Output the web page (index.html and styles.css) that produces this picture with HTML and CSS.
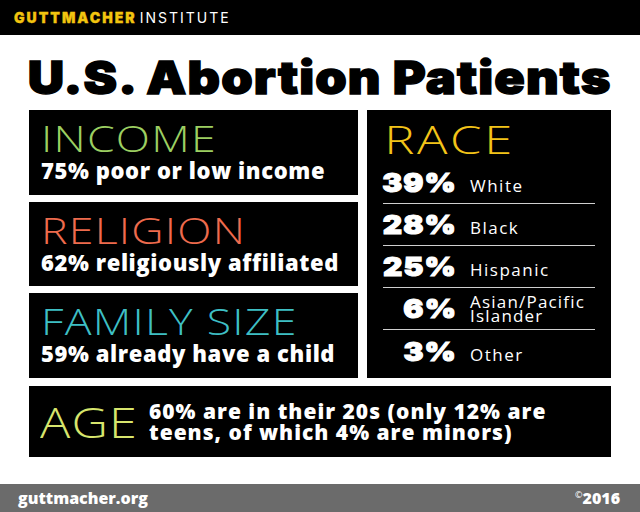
FILE: index.html
```html
<!DOCTYPE html>
<html>
<head>
<meta charset="utf-8">
<link rel="stylesheet" href="styles.css">
</head>
<body>
<div class="page">
  <header class="topbar"><span class="brand">GUTTMACHER</span><span class="inst">INSTITUTE</span></header>
  <h1 class="title"><span class="titletext">U.S. Abortion Patients</span></h1>
  <div class="grid">
    <div class="left">
      <div class="box">
        <div class="head green">INCOME</div>
        <div class="sub">75% poor or low income</div>
      </div>
      <div class="box">
        <div class="head orange">RELIGION</div>
        <div class="sub">62% religiously affiliated</div>
      </div>
      <div class="box">
        <div class="head teal">FAMILY SIZE</div>
        <div class="sub">59% already have a child</div>
      </div>
    </div>
    <div class="race">
      <div class="racehead">RACE</div>
      <div class="row"><span class="num">39%</span><span class="lab">White</span></div>
      <div class="row"><span class="num">28%</span><span class="lab">Black</span></div>
      <div class="row"><span class="num">25%</span><span class="lab">Hispanic</span></div>
      <div class="row"><span class="num">6%</span><span class="lab two">Asian/Pacific<br>Islander</span></div>
      <div class="row last"><span class="num">3%</span><span class="lab">Other</span></div>
    </div>
  </div>
  <div class="age">
    <div class="agehead">AGE</div>
    <div class="agetext">60% are in their 20s (only 12% are<br>teens, of which 4% are minors)</div>
  </div>
  <footer class="foot"><span class="url">guttmacher.org</span><span class="year"><sup>©</sup>2016</span></footer>
</div>
</body>
</html>
```

FILE: styles.css
```css
* { box-sizing: border-box; }
html, body { margin: 0; padding: 0; background: #fff; }
.page {
  width: 640px;
  height: 512px;
  display: flex;
  flex-direction: column;
  font-family: "Inter", "Liberation Sans", sans-serif;
  overflow: hidden;
}
.topbar {
  height: 35px;
  background: #000;
  display: flex;
  align-items: center;
  padding-left: 14px;
  font-size: 14px;
  letter-spacing: 2px;
}
.brand { color: #f2c40f; font-weight: 900; -webkit-text-stroke: 0.3px #f2c40f; }
.inst { color: #fff; font-weight: 400; margin-left: 3px; }
.title {
  margin: 17px 0 0 0;
  height: 58px;
  text-align: center;
  font-weight: 900;
  font-size: 45px;
  line-height: 52px;
  color: #000;
}
.titletext {
  display: inline-block;
  letter-spacing: 1px;
  -webkit-text-stroke: 1.4px #000;
  transform: scaleX(1.12);
  transform-origin: center;
}
.grid {
  display: grid;
  grid-template-columns: 329px 244px;
  column-gap: 9px;
  margin-left: 29px;
  height: 268px;
}
.left {
  display: flex;
  flex-direction: column;
  gap: 7px;
}
.box {
  background: #000;
  flex: 1;
  padding: 10px 0 0 12px;
}
.head {
  font-family: "Open Sans", sans-serif;
  font-weight: 300;
  font-size: 36px;
  line-height: 38px;
  letter-spacing: 1px;
  transform: scaleX(1.24);
  transform-origin: left center;
  white-space: nowrap;
}
.green { color: #9ccf62; }
.orange { color: #ee6b4d; }
.teal { color: #3ebfc4; }
.sub {
  color: #fff;
  font-family: "Open Sans", sans-serif;
  font-weight: 800;
  font-size: 22px;
  line-height: 24px;
  letter-spacing: 0.6px;
  white-space: nowrap;
}
.race {
  background: #000;
  padding: 6px 16px 0 16px;
  display: flex;
  flex-direction: column;
}
.racehead {
  color: #f3c419;
  font-family: "Open Sans", sans-serif;
  font-weight: 300;
  font-size: 39px;
  line-height: 46px;
  padding-left: 1px;
  letter-spacing: 2px;
  transform: scaleX(1.3);
  transform-origin: left center;
}
.row {
  height: 42px;
  display: flex;
  align-items: center;
  border-bottom: 1px solid #cfcfcf;
}
.row.last { border-bottom: none; }
.num {
  width: 74px;
  text-align: right;
  color: #fff;
  font-weight: 900;
  font-size: 26px;
  letter-spacing: 1px;
  margin-right: -1px;
  -webkit-text-stroke: 1.1px #fff;
  transform: scaleX(1.15);
  transform-origin: right center;
}
.lab {
  color: #fff;
  font-family: "Open Sans", sans-serif;
  font-weight: 400;
  font-size: 17px;
  letter-spacing: 1.5px;
  margin-left: 14px;
  padding-top: 6px;
  white-space: nowrap;
}
.lab.two { line-height: 14px; padding-top: 0; letter-spacing: 1.2px; }
.age {
  margin: 8px 0 0 29px;
  width: 582px;
  height: 71px;
  background: #000;
  display: flex;
  align-items: center;
  padding-left: 11px;
}
.agehead {
  color: #d7e56d;
  font-family: "Open Sans", sans-serif;
  font-weight: 300;
  font-size: 42px;
  width: 109px;
  letter-spacing: 1px;
  transform: scaleX(1.2);
  transform-origin: left center;
}
.agetext {
  color: #fff;
  font-family: "Open Sans", sans-serif;
  font-weight: 800;
  font-size: 21px;
  line-height: 21px;
  letter-spacing: 1px;
  white-space: nowrap;
}
.foot {
  margin-top: auto;
  height: 28px;
  background: #6b6b6b;
  display: flex;
  align-items: center;
  justify-content: space-between;
  padding: 0 20px 0 18px;
  color: #fff;
  font-family: "Open Sans", sans-serif;
  font-weight: 800;
  font-size: 16px;
}
.year sup { font-size: 9px; vertical-align: 6px; font-weight: 400; }
```
